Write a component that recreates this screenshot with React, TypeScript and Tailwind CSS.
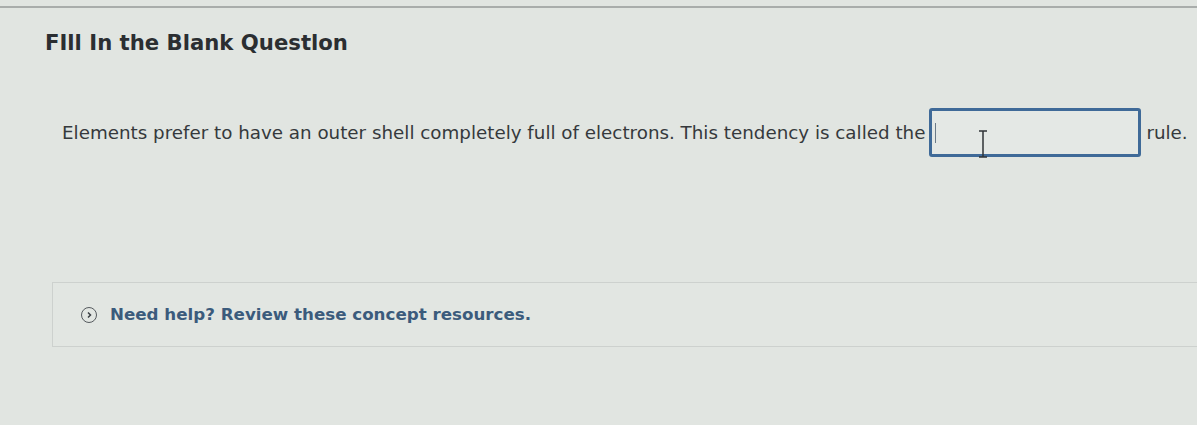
export default function App() {
  return (
    <div className="w-[1197px] h-[425px] overflow-hidden bg-[#e1e5e1] text-[#2d3033]" style={{ fontFamily: '"DejaVu Sans", "Liberation Sans", sans-serif' }}>
      <div className="h-[8px] border-b-2 border-[#a9adab]" />
      <h1 className="ml-[45px] mt-[20px] text-[21.2px] font-bold leading-[30px] text-[#2b2e31]">FIll In the Blank Questlon</h1>
      <div className="ml-[62px] mt-[50px] flex items-center text-[18.3px] text-[#35393c]">
        <span>Elements prefer to have an outer shell completely full of electrons. This tendency is called the</span>
        <div className="relative ml-[4px] flex h-[49px] w-[212px] shrink-0 items-center rounded-[3px] border-[3px] border-[#3f6a98] bg-[#e4e8e5] pl-[3px]">
          <div className="h-[20px] w-px bg-[#6a7a88]" />
          <svg className="absolute left-[46px] top-[19px]" width="10" height="28" viewBox="0 0 10 28" fill="none" stroke="#2f3337" strokeWidth="1.5">
            <path d="M1 1 H9 M5 1 V27 M1 27 H9" />
          </svg>
        </div>
        <span className="ml-[5px]">rule.</span>
      </div>
      <div className="ml-[52px] mt-[125px] flex h-[65px] items-center border border-r-0 border-[#cdd1ce] bg-[#e2e6e2] pl-[28px]">
        <div className="flex h-[16px] w-[16px] items-center justify-center rounded-full border-[1.5px] border-[#555a5e]">
          <svg width="8" height="8" viewBox="0 0 8 8" fill="none" stroke="#3a3f44" strokeWidth="1.5"><path d="M3 1.5 L5.5 4 L3 6.5" /></svg>
        </div>
        <span className="ml-[13px] text-[16.7px] font-bold text-[#3b5b7c]">Need help? Review these concept resources.</span>
      </div>
    </div>
  );
}
